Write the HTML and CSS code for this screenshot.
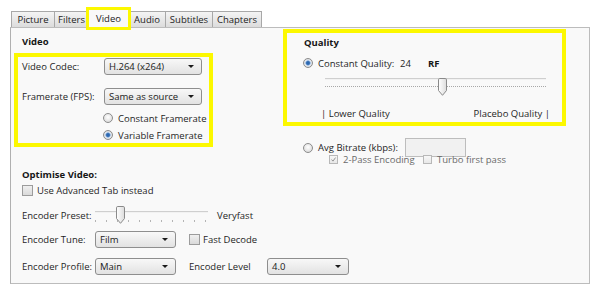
FILE: index.html
```html
<!DOCTYPE html>
<html>
<head>
<meta charset="utf-8">
<link rel="stylesheet" href="styles.css">
</head>
<body>
<div class="tabs">
  <div class="tab t-picture">Picture</div>
  <div class="tab t-filters">Filters</div>
  <div class="tab t-video active">Video</div>
  <div class="tab t-audio">Audio</div>
  <div class="tab t-subs">Subtitles</div>
  <div class="tab t-chapters">Chapters</div>
</div>
<div class="panel">
  <div class="top">
    <div class="col-left">
      <div class="heading video-h">Video</div>
      <div class="hl video-box">
        <div class="frow">
          <span class="flabel">Video Codec:</span>
          <div class="select s-codec"><span>H.264 (x264)</span><i class="arrow"></i></div>
        </div>
        <div class="frow row2">
          <span class="flabel">Framerate (FPS):</span>
          <div class="select s-codec"><span>Same as source</span><i class="arrow"></i></div>
        </div>
        <div class="orow r1"><span class="radio"></span><span>Constant Framerate</span></div>
        <div class="orow r2"><span class="radio on"></span><span>Variable Framerate</span></div>
      </div>
    </div>
    <div class="col-right">
      <div class="hl quality-box">
        <div class="heading">Quality</div>
        <div class="orow q-row"><span class="radio on"></span><span class="q-label">Constant Quality:</span><span class="q-val">24</span><b>RF</b></div>
        <div class="slider q-slider">
          <div class="track"></div>
          <div class="ticks dense"></div>
          <svg class="thumb" width="9" height="18" viewBox="0 0 9 18"><defs><linearGradient id="tg1" x1="0" y1="0" x2="1" y2="0"><stop offset="0" stop-color="#ffffff"/><stop offset="1" stop-color="#dcdcdc"/></linearGradient></defs><path d="M1.8 0.5 h5.4 a1.3 1.3 0 0 1 1.3 1.3 v10.7 l-4 4.8 l-4 -4.8 v-10.7 a1.3 1.3 0 0 1 1.3 -1.3z" fill="url(#tg1)" stroke="#8a8a8a"/></svg>
        </div>
        <div class="q-ends"><span>| Lower Quality</span><span>Placebo Quality |</span></div>
      </div>
      <div class="orow avg-row"><span class="radio"></span><span class="avg-label">Avg Bitrate (kbps):</span><span class="input"></span></div>
      <div class="orow pass-row">
        <span class="check dis"><svg width="9" height="9" viewBox="0 0 9 9"><path d="M2 4.6 L3.8 6.6 L7.2 2" fill="none" stroke="#8d8d8d" stroke-width="1.2"/></svg></span><span class="pass-label muted">2-Pass Encoding</span>
        <span class="check dis"></span><span class="muted turbo">Turbo first pass</span>
      </div>
    </div>
  </div>
  <div class="optimise">
    <div class="heading">Optimise Video:</div>
    <div class="orow adv-row"><span class="check big"></span><span class="adv-label">Use Advanced Tab instead</span></div>
    <div class="orow preset-row">
      <span class="olabel">Encoder Preset:</span>
      <div class="slider p-slider">
        <div class="track"></div>
        <div class="ticks sparse"></div>
        <svg class="thumb" width="9" height="18" viewBox="0 0 9 18"><defs><linearGradient id="tg2" x1="0" y1="0" x2="1" y2="0"><stop offset="0" stop-color="#ffffff"/><stop offset="1" stop-color="#dcdcdc"/></linearGradient></defs><path d="M1.8 0.5 h5.4 a1.3 1.3 0 0 1 1.3 1.3 v10.7 l-4 4.8 l-4 -4.8 v-10.7 a1.3 1.3 0 0 1 1.3 -1.3z" fill="url(#tg2)" stroke="#8a8a8a"/></svg>
      </div>
      <span class="veryfast">Veryfast</span>
    </div>
    <div class="orow tune-row">
      <span class="olabel">Encoder Tune:</span>
      <div class="select s-small"><span>Film</span><i class="arrow"></i></div>
      <span class="check big fd"></span><span class="fd-label">Fast Decode</span>
    </div>
    <div class="orow profile-row">
      <span class="olabel">Encoder Profile:</span>
      <div class="select s-small"><span>Main</span><i class="arrow"></i></div>
      <span class="level-label">Encoder Level</span>
      <div class="select s-level"><span>4.0</span><i class="arrow"></i></div>
    </div>
  </div>
</div>
</body>
</html>
```
FILE: styles.css
```css
* { box-sizing: border-box; }
body {
  margin: 0;
  width: 600px;
  height: 295px;
  overflow: hidden;
  background: #ffffff;
  font-family: "Open Sans", "Noto Sans", sans-serif;
  font-size: 9.5px;
  color: #1f1f1f;
  white-space: nowrap;
}

/* tabs */
.tabs {
  display: flex;
  align-items: flex-end;
  margin-left: 11px;
  padding-top: 9px;
  height: 27px;
  position: relative;
  z-index: 2;
}
.tab {
  height: 16px;
  line-height: 15px;
  text-align: center;
  border: 1px solid #a8a8a8;
  border-bottom: none;
  background: linear-gradient(#f4f4f4, #dcdcdc);
  margin-right: -1px;
  color: #222222;
}
.t-picture { width: 44px; }
.t-filters { width: 35px; }
.t-video { width: 41px; }
.t-audio { width: 38px; }
.t-subs { width: 48px; }
.t-chapters { width: 50px; }
.tab.active {
  height: 19px;
  line-height: 18px;
  margin-bottom: -1px;
  background: #f9f9f9;
  outline: 3px solid #fcf800;
  outline-offset: -1px;
  position: relative;
  z-index: 3;
}

/* panel */
.panel {
  margin-left: 10px;
  width: 580px;
  height: 257px;
  border: 1px solid #bcbcbc;
  border-left: 1px solid #b0b0b0;
  background: #f9f9f9;
}
.top { display: flex; }
.heading { font-weight: bold; line-height: 14px; color: #161616; }
.hl { border: 4px solid #fcf800; }

.col-left { width: 272px; flex: none; padding: 7px 0 0 3px; }
.video-h { margin-left: 8px; }
.video-box { width: 199px; height: 94px; margin-top: 4px; padding: 1px 0 0 4px; }
.frow { display: flex; align-items: center; height: 17px; }
.row2 { margin-top: 13px; }
.flabel { width: 82px; flex: none; }
.orow { display: flex; align-items: center; height: 14px; }
.r1 { margin-top: 6px; margin-left: 81px; }
.r2 { margin-top: 3px; margin-left: 81px; }
.orow .radio { margin-right: 5px; }

.select {
  flex: none;
  display: flex;
  align-items: center;
  justify-content: space-between;
  height: 17px;
  border: 1px solid #8e8e8e;
  border-radius: 3px;
  background: linear-gradient(#f8f8f8, #e2e2e2);
  padding: 0 7px 0 4px;
  color: #1a1a1a;
}
.s-codec { width: 98px; }
.s-small { width: 81px; }
.s-level { width: 82px; }
.arrow {
  width: 0;
  height: 0;
  border-left: 3px solid transparent;
  border-right: 3px solid transparent;
  border-top: 3px solid #1a1a1a;
}

.radio {
  flex: none;
  width: 10px;
  height: 10px;
  border-radius: 50%;
  border: 1px solid #8c8c8c;
  background: radial-gradient(circle at 50% 40%, #ffffff, #d3d3d3);
}
.radio.on {
  background: radial-gradient(circle, #2c68b0 0 1.4px, #7ea6d8 2.2px, #e4ebf3 3px, #d9d9d9 4.2px);
}
.check {
  flex: none;
  display: inline-flex;
  align-items: center;
  justify-content: center;
  width: 9px;
  height: 9px;
  border: 1px solid #9c9c9c;
  background: linear-gradient(#f0f0f0, #dadada);
}
.check.dis { border-color: #b8b8b8; background: linear-gradient(#f7f7f7, #e8e8e8); }
.check.big { width: 11px; height: 11px; }
.muted { color: #6a6a6a; }

/* quality */
.col-right { padding-top: 1px; }
.quality-box { width: 283px; height: 97px; padding: 3px 0 0 17px; }
.q-row { margin-top: 6px; margin-left: -1px; }
.q-label { width: 82px; flex: none; }
.q-val { width: 28px; flex: none; }
.q-row b { font-weight: bold; color: #161616; }

.slider { position: relative; height: 20px; flex: none; }
.track {
  margin-top: 8px;
  height: 2px;
  background: #cfcfcf;
  border-bottom: 1px solid #f2f2f2;
}
.ticks { margin-top: 6px; height: 1px; }
.ticks.dense { background: repeating-linear-gradient(90deg, #a8a8a8 0 1px, transparent 1px 2px); }
.ticks.sparse { margin-top: 7px; height: 2px; background: repeating-linear-gradient(90deg, #b4b4b4 0 1px, transparent 1px 11px); }
.thumb { position: absolute; top: 0; }

.q-slider { width: 221px; margin: 4px 0 0 21px; }
.q-slider .thumb { left: 113px; }
.q-ends { display: flex; justify-content: space-between; width: 229px; margin: 9px 0 0 17px; line-height: 14px; }

.avg-row { height: 19px; margin: 12px 0 0 20px; }
.avg-label { width: 87px; flex: none; }
.input { width: 61px; height: 19px; flex: none; border: 1px solid #bdbdbd; background: #f1f1f1; }
.pass-row { margin: -5px 0 0 46px; }
.pass-row .check { margin-right: 5px; }
.pass-label { width: 80px; flex: none; }

/* optimise */
.optimise { padding-left: 11px; margin-top: 2px; }
.adv-row { margin-top: 1px; }
.adv-label { margin-left: 4px; }
.olabel { width: 73px; flex: none; }
.preset-row { height: 20px; margin-top: 8px; }
.p-slider { width: 113px; height: 20px; }
.p-slider .thumb { left: 21px; top: 1px; }
.p-slider .track { margin-top: 6px; }
.veryfast { margin-left: 9px; }
.tune-row { height: 17px; margin-top: 6px; }
.fd { margin-left: 13px; }
.fd-label { margin-left: 3px; }
.profile-row { height: 17px; margin-top: 10px; }
.level-label { width: 78px; flex: none; margin-left: 13px; }
```
